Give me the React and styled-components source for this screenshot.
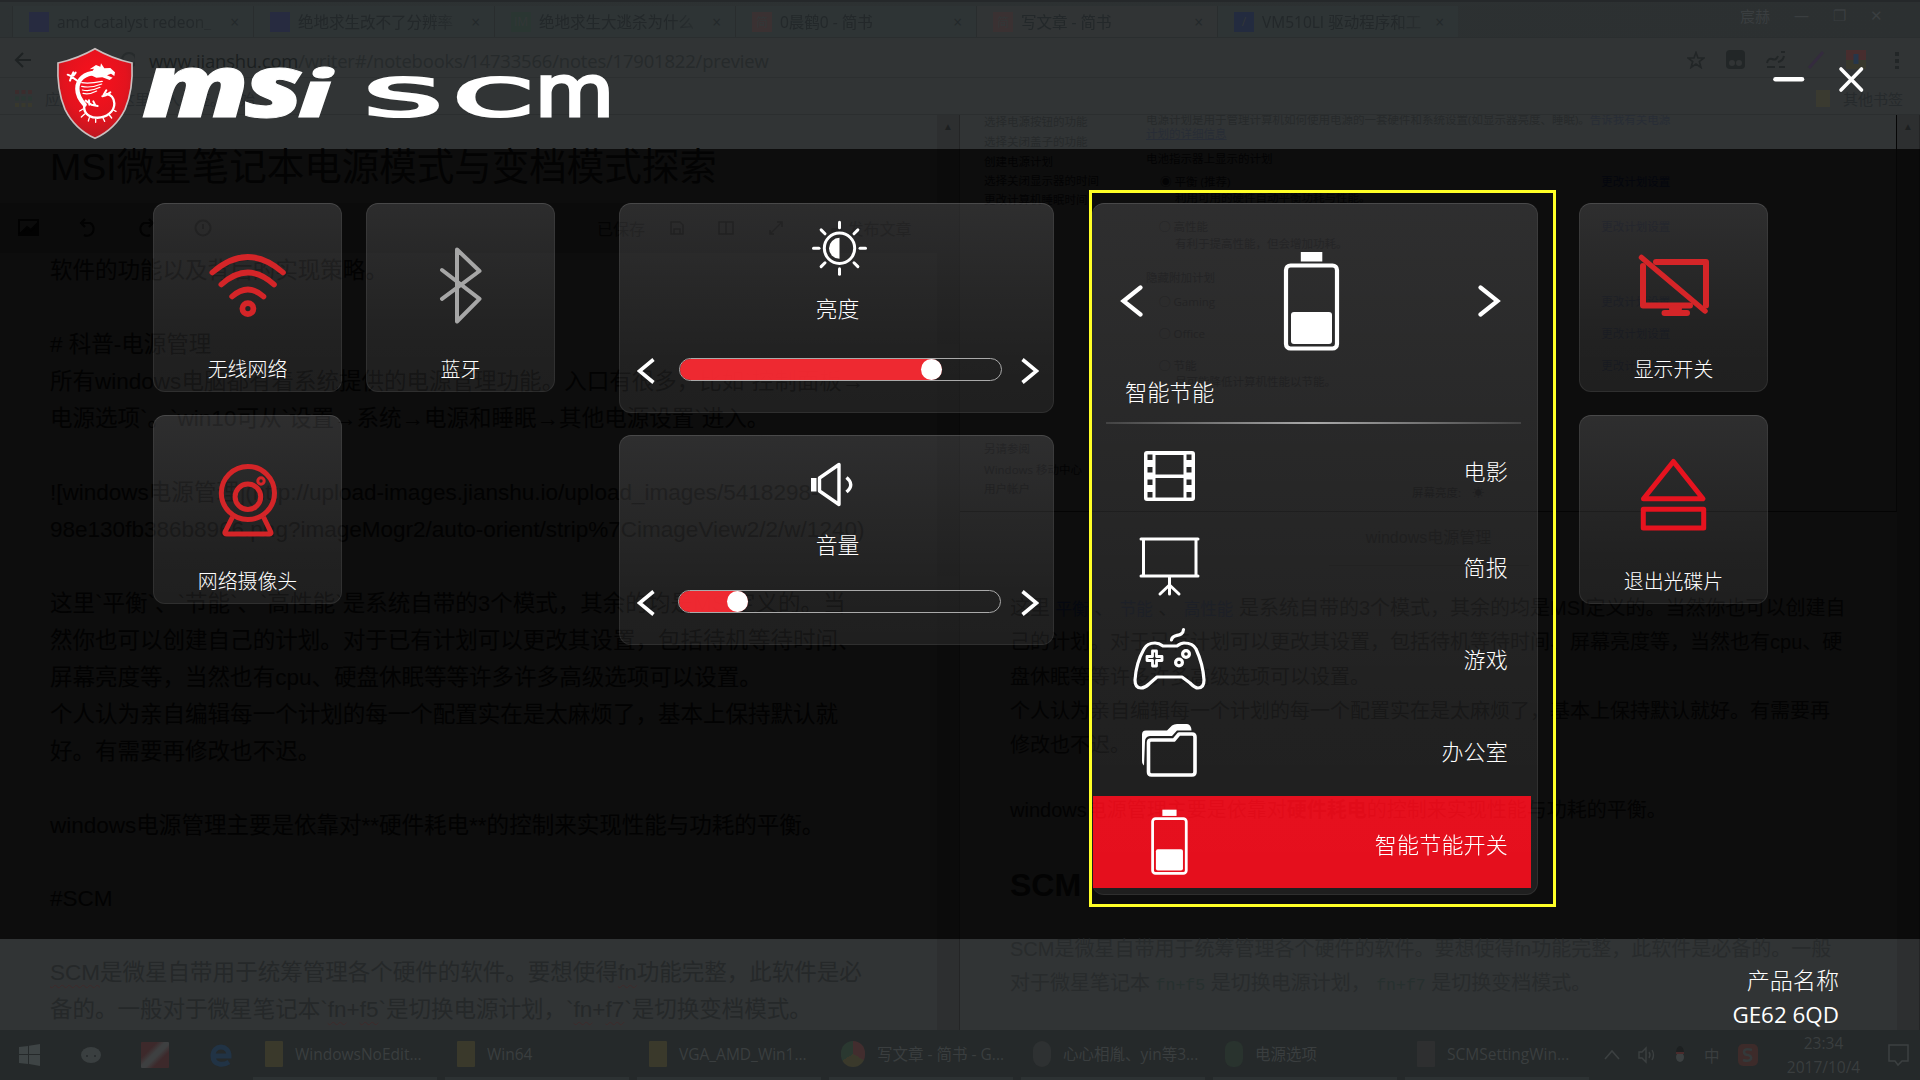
import React from 'react';
import styled, { createGlobalStyle } from 'styled-components';

const cjk = `"Liberation Sans", "Noto Sans CJK SC", sans-serif`;
const ui = `"Open Sans", "Noto Sans CJK SC", sans-serif`;

const GlobalStyle = createGlobalStyle`
  * { box-sizing: border-box; }
  body { margin: 0; background: #0d0d0d; overflow: hidden; }
`;

/* ---------- page stack ---------- */
const Screen = styled.div`
  display: grid;
  width: 1920px;
  height: 1080px;
  overflow: hidden;
  font-family: ${cjk};
`;

const Layer = styled.div`
  grid-area: 1 / 1;
  display: flex;
  flex-direction: column;
  min-width: 0;
  height: 1080px;
  white-space: pre;
`;

const Desktop = styled(Layer)`
  background: linear-gradient(
    #313435 0 149px,
    #0d0d0d 149px 939px,
    #313435 939px 1030px,
    #25292a 1030px
  );
`;

/* ---------- dimmed browser ---------- */
const TabStrip = styled.div`
  display: flex;
  align-items: center;
  height: 38px;
  padding: 4px 0 0 12px;
  border-top: 2px solid #25282a;
  border-bottom: 1px solid #2a2e2f;
  background: linear-gradient(90deg, #2d3233, #2c3031);
  font: 15.5px ${ui};
  color: #23282a;
`;

const Tab = styled.div`
  display: flex;
  align-items: center;
  gap: 8px;
  width: 241px;
  height: 31px;
  padding: 0 14px 0 16px;
  border-left: 1px solid #292d2e;
  background: ${(p) => (p.$active ? '#313435' : '#2e3435')};
`;

const TabTitle = styled.span`
  flex: 1;
  mask-image: linear-gradient(90deg, #000 80%, rgba(0, 0, 0, 0.3));
`;

const Favicon = styled.i`
  display: grid;
  place-items: center;
  width: 20px;
  height: 20px;
  background: ${(p) => p.$c};
  font: 12px ${ui};
  color: #333738;
`;

const WindowButtons = styled.div`
  display: flex;
  gap: 24px;
  margin-left: 282px;
  padding-bottom: 12px;
  font-size: 15px;
  color: #3a3e40;
`;

const AddressRow = styled.div`
  display: flex;
  align-items: center;
  height: 40px;
  padding: 5px 15px 0 13px;
  border-bottom: 1px solid #2c2f30;
  font: 18.4px ${ui};
  color: #262a2b;
`;

const Url = styled.div`
  flex: 1;
  padding-left: 14px;
  letter-spacing: -0.15px;
  b { font-weight: 400; color: #1b1f20; }
`;

const Extensions = styled.div`
  display: flex;
  align-items: center;
  gap: 20px;
`;

const Bookmarks = styled.div`
  display: flex;
  align-items: center;
  gap: 13px;
  height: 37px;
  padding: 4px 17px 0 15px;
  border-bottom: 1px solid #2b2e2f;
  font: 15px ${ui};
  color: #262a2c;
`;

const BookmarkFolder = styled.i`
  width: 14px;
  height: 17px;
  margin-left: auto;
  background: #3a3a30;
`;

const Panes = styled.div`
  display: flex;
  height: 915px;
`;

const Editor = styled.div`
  width: 938px;
  padding: 32px 0 0 50px;
  overflow: hidden;
`;

const EditorTitle = styled.div`
  height: 40px;
  line-height: 40px;
  font-size: 37.5px;
  color: #030303;
`;

const EditorTools = styled.div`
  display: flex;
  align-items: center;
  height: 50px;
  margin: 16px 0 0 -50px;
  padding-left: 17px;
  background: #0b0b0b;
  font-size: 16px;
  color: #030303;
`;

const Tool = styled.span`
  width: ${(p) => p.$w}px;
`;

const SourceLine = styled.div`
  height: 36.97px;
  line-height: 36.97px;
  font-size: 22.53px;
  color: ${(p) => (p.$foot ? '#252829' : '#020202')};
`;

const Squiggle = styled.span`
  text-decoration: underline wavy #3d292a 1px;
  text-underline-offset: 4px;
`;

const Gutter = styled.div`
  width: 23px;
  border-right: 1px solid rgba(0, 0, 0, 0.2);
  background: rgba(0, 0, 0, 0.08);
  text-align: center;
  font-size: 10px;
  line-height: 24px;
  color: #1d2021;
`;

const Preview = styled.div`
  width: 937px;
`;

const PowerWindow = styled.div`
  display: flex;
  height: 397px;
  border-bottom: 1px solid #040404;
  border-right: 1px solid #060606;
  font: 11.5px ${ui};
  overflow: hidden;
`;

const PowerNav = styled.div`
  width: 186px;
  padding-left: 24px;
`;

const PowerBody = styled.div`
  flex: 1;
`;

const Small = styled.div`
  display: flex;
  justify-content: space-between;
  height: 16px;
  line-height: 16px;
  margin-top: ${(p) => p.$gap}px;
  padding-left: ${(p) => p.$in || 0}px;
  padding-right: 288px;
  color: ${(p) => (p.$head ? '#272a2b' : '#030304')};
`;

const LinkText = styled.span`
  color: ${(p) => (p.$head ? '#282d36' : '#04060d')};
`;

const Caption = styled.div`
  width: 200px;
  margin: 14px auto 0;
  padding-bottom: 15px;
  border-bottom: 1px solid #090909;
  text-align: center;
  font-size: 16px;
  line-height: 24px;
  color: #050505;
`;

const Para = styled.div`
  height: 34.3px;
  line-height: 34.3px;
  margin-top: ${(p) => p.$gap || 0}px;
  padding-left: 50px;
  font-size: 20px;
  color: ${(p) => (p.$foot ? '#282b2c' : '#030303')};
  code { font: 16.5px "Liberation Mono", "Noto Sans CJK SC", monospace; color: ${(p) => (p.$foot ? '#27302f' : '#050810')}; }
`;

const Heading = styled(Para)`
  font-size: 32px;
  font-weight: 700;
`;

const Taskbar = styled.div`
  display: flex;
  align-items: center;
  height: 50px;
  font: 15.5px ${ui};
  color: #3a3e3f;
`;

const Pinned = styled.div`
  display: flex;
  align-items: center;
  gap: 40px;
  width: 253px;
  padding-left: 19px;
`;

const Task = styled.div`
  display: flex;
  align-items: center;
  gap: 12px;
  width: 184px;
  height: 50px;
  margin-right: 8px;
  padding-left: 12px;
  border-bottom: 3px solid #2d3233;
`;

const TaskIcon = styled.i`
  flex: none;
  width: ${(p) => p.$w || 18}px;
  height: 26px;
  border-radius: ${(p) => p.$r || 1}px;
  background: ${(p) => p.$c};
`;

const Tray = styled.div`
  display: flex;
  align-items: center;
  gap: 18px;
  padding-left: 7px;
`;

const Clock = styled.div`
  width: 92px;
  margin-left: 2px;
  text-align: center;
  line-height: 24px;
`;

/* ---------- control center ---------- */
const Header = styled.header`
  display: flex;
  justify-content: space-between;
  height: 149px;
`;

const WindowControls = styled.svg`
  width: 147px;
  height: 149px;
`;

const Main = styled.main`
  display: flex;
  align-items: flex-start;
  height: 790px;
  padding: 41px 0 0 153px;
`;

const Tiles = styled.section`
  display: grid;
  grid-template-columns: repeat(${(p) => p.$cols}, 189px);
  gap: 23px 24px;
  margin: 13px ${(p) => p.$right}px 0 0;
`;

const surface = `
  border: 1px solid rgba(255, 255, 255, 0.07);
  border-top-color: rgba(255, 255, 255, 0.13);
  border-radius: 12px;
  background: linear-gradient(rgba(250, 250, 255, 0.14), rgba(255, 255, 255, 0.085) 75%, rgba(255, 255, 255, 0.08));
  background-origin: border-box;
`;

const Tile = styled.button`
  ${surface}
  display: flex;
  flex-direction: column;
  align-items: center;
  width: 189px;
  height: 189px;
  padding: 0;
  color: #fff;
  font: 19.9px/30px ${cjk};
  font-weight: 300;
`;

const TileArt = styled.svg`
  width: 189px;
  height: 152px;
  flex: none;
  margin-top: -1px;
`;

const Sliders = styled.section`
  display: flex;
  flex-direction: column;
  gap: 22px;
  width: 435px;
  margin: 13px 35px 0 0;
`;

const SliderCard = styled.div`
  ${surface}
  display: flex;
  flex-direction: column;
  align-items: center;
  height: 210px;
  color: #fff;
`;

const SliderArt = styled.svg`
  width: 433px;
  height: 88px;
  flex: none;
`;

const SliderLabel = styled.div`
  margin-top: ${(p) => p.$gap}px;
  padding-left: 2px;
  font-size: 21.8px;
  font-weight: 300;
  line-height: 32px;
`;

const SliderRow = styled.div`
  display: flex;
  align-items: center;
  justify-content: space-between;
  width: 402px;
  margin: auto 0 ${(p) => p.$bottom}px 2px;
`;

const Track = styled.div`
  display: flex;
  width: 323px;
  height: 23px;
  margin-left: ${(p) => p.$shift}px;
  margin-top: -3px;
  border: 1px solid #aaa;
  border-radius: 12px;
  overflow: hidden;
`;

const Fill = styled.div`
  display: flex;
  justify-content: flex-end;
  border-radius: 0 11px 11px 0;
  background: rgba(247, 42, 50, 0.96);
`;

const Knob = styled.i`
  width: 21px;
  height: 21px;
  border-radius: 50%;
  background: #fff;
`;

const Highlight = styled.section`
  width: 467px;
  height: 717px;
  margin-right: 23px;
  padding-top: 10px;
  border: 3px solid #ffff26;
`;

const PowerPanel = styled.div`
  ${surface}
  border-left: 0;
  width: 446px;
  height: 692px;
  color: #fff;
  font-weight: 300;
`;

const CurrentMode = styled.div`
  height: 219px;
  font-size: 22.3px;
  line-height: 32px;
`;

const ModeArt = styled.svg`
  display: block;
  width: 445px;
  height: 172px;
`;

const ModeName = styled.div`
  padding: 2px 0 0 33px;
`;

const Divider = styled.div`
  height: 2px;
  margin: -1px 16px 5.6px 14px;
  background: linear-gradient(90deg, rgba(255, 255, 255, 0.12), rgba(255, 255, 255, 0.6), rgba(255, 255, 255, 0.12));
`;

const ModeRow = styled.div`
  display: flex;
  align-items: center;
  justify-content: space-between;
  width: 438px;
  height: 91.6px;
  margin-left: 1px;
  padding-right: 23px;
  background: ${(p) => (p.$on ? 'rgba(244, 0, 16, 0.88)' : 'transparent')};
  ${(p) => p.$on && 'backdrop-filter: brightness(4);'}
`;

const ModeIcon = styled.svg`
  width: 154px;
  height: 91px;
`;

const ModeLabel = styled.span`
  margin-top: ${(p) => p.$dy}px;
  font-size: 22px;
  letter-spacing: 0.2px;
`;

const Footer = styled.footer`
  display: flex;
  flex-direction: column;
  align-items: flex-end;
  height: 91px;
  padding: 25px 81px 0 0;
  color: #fff;
  font: 23.1px/34px ${cjk};
  font-weight: 300;
`;

const Model = styled.span`
  font: 22.4px/34px ${ui};
`;

const Chevron = ({ right }) => (
  <svg width="18" height="26" viewBox="0 0 18 26" fill="none" stroke="#fff" strokeWidth="3.6">
    <path d={right ? 'M1.5 1.5 L15.5 13 L1.5 24.5' : 'M16.5 1.5 L2.5 13 L16.5 24.5'} />
  </svg>
);

const Logo = () => (
  <svg width="640" height="149" viewBox="0 0 640 149">
    <defs>
      <radialGradient id="shield" cx="0.5" cy="0.35" r="0.7">
        <stop offset="0" stopColor="#fb101c" />
        <stop offset="0.6" stopColor="#e3131e" />
        <stop offset="1" stopColor="#b31a22" />
      </radialGradient>
    </defs>
    <g transform="translate(50 40) scale(.33333)">
      <path d="M135 26 Q185 55 246 69 Q250 150 225 208 Q195 268 135 295 Q75 268 45 208 Q20 150 24 69 Q85 55 135 26Z" fill="url(#shield)" stroke="#c9bfbf" strokeWidth="5" />
      <g fill="none" stroke="#fff" strokeLinecap="round" strokeLinejoin="round">
        <path d="M137 99 C104 99 82 118 82 146 C82 166 92 181 104 194" strokeWidth="13" />
        <path d="M104 192 C98 215 112 231 138 233 C170 235 194 213 193 190 C192 174 183 163 169 162" strokeWidth="7" />
        <path d="M107 182 L124 194 L143 198 M118 194 L117 181 M130 184 L136 196" strokeWidth="6" />
        <path d="M95 128 C118 132 137 128 157 124 M95 139 C118 144 138 139 155 132 M97 150 C119 155 134 150 150 142 M99 160 C115 164 127 160 140 153" strokeWidth="3.5" />
        <path d="M83 123 L64 110 L70 97 M65 109 L53 104 M64 111 L60 122 M71 106 L77 98" strokeWidth="6" />
        <path d="M161 164 L169 151 M170 164 L181 157 M168 166 L157 169" strokeWidth="6" />
        <path d="M99 207 L89 213 M104 222 L94 231 M118 233 L115 243 M137 237 L137 247 M159 234 L164 244 M178 225 L185 234 M190 210 L198 214" strokeWidth="4" />
      </g>
      <path d="M120 104 L132 86 L119 88 L138 75 L151 80 L153 70 L163 85 L181 84 L195 97 L193 108 L183 101 L171 106 L188 113 L179 120 L157 112 L139 113Z" fill="#fff" />
    </g>
    <g fill="#fff">
      <text y="117" fontFamily="'Open Sans', 'Noto Sans', sans-serif" fontWeight="800" fontStyle="italic" stroke="#fff" strokeWidth="1">
        <tspan x="142" fontSize="87" textLength="107" lengthAdjust="spacingAndGlyphs">m</tspan>
        <tspan x="244" fontSize="87" textLength="60" lengthAdjust="spacingAndGlyphs">s</tspan>
        <tspan x="298" fontSize="64" textLength="33" lengthAdjust="spacingAndGlyphs">i</tspan>
      </text>
      <text y="116" fontFamily="'DejaVu Sans', sans-serif" stroke="#fff" strokeWidth="3.2">
        <tspan x="364" fontSize="52" textLength="78" lengthAdjust="spacingAndGlyphs">S</tspan>
        <tspan x="454" fontSize="52" textLength="78" lengthAdjust="spacingAndGlyphs">C</tspan>
        <tspan x="535" fontSize="71" textLength="79" lengthAdjust="spacingAndGlyphs">m</tspan>
      </text>
    </g>
  </svg>
);

const red = '#d42528';
const tiles = {
  wifi: (
    <g fill="none" stroke={red} strokeWidth="5.6" strokeLinecap="round">
      <path d="M212.8 272.5 Q248.5 241.5 283.5 272.5" />
      <path d="M221.8 284.5 Q248.5 260.5 274.5 284.5" />
      <path d="M232.6 296.5 Q248.5 282.5 264 296.5" />
      <circle cx="248.4" cy="308.6" r="5.5" strokeWidth="5.8" />
    </g>
  ),
  bluetooth: (
    <path d="M442 270 L479.5 298.8 L457 321.5 V249.5 L479.5 271 L442 298.8" fill="none" stroke="#a6a6a6" strokeWidth="4" strokeLinecap="round" strokeLinejoin="round" />
  ),
  webcam: (
    <g fill="none" stroke={red} strokeWidth="5" strokeLinejoin="round">
      <circle cx="248.4" cy="493" r="26.6" />
      <circle cx="248.4" cy="496.8" r="12.8" />
      <circle cx="261.5" cy="481" r="3.2" strokeWidth="3" />
      <path d="M233 517 L225.5 532 Q225 534 227 534 H270 Q272 534 271.3 532 L264 517" />
    </g>
  ),
  display: (
    <g fill="none" stroke={red} strokeWidth="6" strokeLinejoin="round" strokeLinecap="round">
      <path d="M1656 262 H1706 V305.5 M1690 305.5 H1643 V266" />
      <path d="M1664.5 313 H1687 M1672 308.5 H1679" />
      <path d="M1641.5 257.5 L1705 311" strokeWidth="5.5" />
    </g>
  ),
  eject: (
    <g fill="none" stroke="#e6131f" strokeWidth="5" strokeLinejoin="round">
      <path d="M1673.4 461.5 L1703 498.7 H1643.5Z" />
      <rect x="1643.3" y="509.3" width="60.4" height="18.8" />
    </g>
  ),
};

const IconTile = ({ icon, x, y, label }) => (
  <Tile>
    <TileArt viewBox={`${x} ${y} 189 152`}>{tiles[icon]}</TileArt>
    {label}
  </Tile>
);

const SliderControl = ({ art, label, gap, value, bottom, shift }) => (
  <SliderCard>
    {art}
    <SliderLabel $gap={gap}>{label}</SliderLabel>
    <SliderRow $bottom={bottom}>
      <Chevron />
      <Track $shift={shift}>
        <Fill style={{ width: value }}><Knob /></Fill>
      </Track>
      <Chevron right />
    </SliderRow>
  </SliderCard>
);

const rays = [0, 45, 90, 135, 180, 225, 270, 315];

const Battery = ({ s = 1 }) => (
  <g transform={`scale(${s})`}>
    <rect x="-10.5" y="-49" width="21.5" height="9.5" fill="#fff" />
    <rect x="-25.3" y="-35.5" width="51" height="83" rx="4.5" fill="none" stroke="#fff" strokeWidth="4.2" />
    <rect x="-20.3" y="11" width="41" height="32" rx="3" fill="#fff" />
  </g>
);

const modeIcons = {
  film: (
    <path
      transform="translate(1144 451)"
      fill="#fff"
      fillRule="evenodd"
      d="M3 0 H48 Q51 0 51 3 V47 Q51 50 48 50 H3 Q0 50 0 47 V3 Q0 0 3 0Z M11.5 4 V23.5 H39.5 V4Z M11.5 27 V46.5 H39.5 V27Z M3.5 3.5 V9 H8.5 V3.5Z M3.5 16 V21.5 H8.5 V16Z M3.5 28.5 V34 H8.5 V28.5Z M3.5 41 V46.5 H8.5 V41Z M42.5 3.5 V9 H47.5 V3.5Z M42.5 16 V21.5 H47.5 V16Z M42.5 28.5 V34 H47.5 V28.5Z M42.5 41 V46.5 H47.5 V41Z"
    />
  ),
  board: (
    <g fill="none" stroke="#fff" strokeWidth="3" strokeLinecap="round">
      <path d="M1141 539.5 H1198 M1141 576.5 H1198 M1143.5 539.5 V576 M1196 539.5 V576 M1169.5 577 V594.5 M1169.5 585.5 L1160 594.5 M1169.5 585.5 L1179 594.5" />
    </g>
  ),
  pad: (
    <g fill="none" stroke="#fff" strokeWidth="3.2" strokeLinejoin="round" strokeLinecap="round">
      <path d="M1155 643 Q1159 643 1163 646 H1177 Q1181 643 1184 643 Q1193 643 1196 649 Q1203 664 1204 680 Q1204 688 1198 688 Q1195 688 1190 683 L1182 677 H1157 L1149 684 Q1145 688 1141 688 Q1135 688 1135 680 Q1136 663 1144 649 Q1147 643 1155 643Z" />
      <path d="M1171.5 640 C1172 633 1183 638 1183.5 629.5" />
      <path d="M1152.5 651 H1156.5 V656.5 H1162 V660.5 H1156.5 V666 H1152.5 V660.5 H1147 V656.5 H1152.5Z" strokeWidth="2.8" />
      <circle cx="1186" cy="654" r="3.4" />
      <circle cx="1179" cy="662.5" r="3.4" />
    </g>
  ),
  folder: (
    <g fill="none" stroke="#fff" strokeWidth="3.6" strokeLinejoin="round">
      <path d="M1148.5 742 Q1148.5 739.5 1151 739.5 H1174 L1179 733.5 H1192 Q1195 733.5 1195 736.5 V771.5 Q1195 774.5 1192 774.5 H1151.5 Q1148.5 774.5 1148.5 771.5Z" />
      <path d="M1144 765 Q1142 764 1142 760 V734 Q1142 730 1146 730 H1167 L1172 725 Q1174 723.5 1177 723.5 H1187 Q1191 723.5 1191.5 730 H1177 L1172 735.5 H1150 Q1145 736 1145 741Z" fill="#fff" stroke="none" />
    </g>
  ),
  battery: <g transform="translate(1169.3 842)"><Battery s={0.66} /></g>,
};

const modes = [
  { icon: 'film', label: '电影', y: 430, dy: -10 },
  { icon: 'board', label: '简报', y: 521.5, dy: -2 },
  { icon: 'pad', label: '游戏', y: 613, dy: -2 },
  { icon: 'folder', label: '办公室', y: 704.5, dy: -1 },
  { icon: 'battery', label: '智能节能开关', y: 796, dy: 3, on: true },
];

const tabs = [
  ['amd catalyst redeon_', '#272b40'],
  ['绝地求生改不了分辨率', '#272b40'],
  ['绝地求生大逃杀为什么', '#2a3632', 'IM'],
  ['0晨鹤0 - 简书', '#3a3132', '简'],
  ['写文章 - 简书', '#3a3132', '简', true],
  ['VM510LI 驱动程序和工', '#232b3f', '/'],
];

const source = [
  '软件的功能以及背后的实现策略。',
  '',
  '# 科普-电源管理',
  '所有windows电脑都有着系统提供的电源管理功能。入口有很多，比如`控制面板→',
  '电源选项`。`win10可从`设置→系统→电源和睡眠→其他电源设置`进入。',
  '',
  '![windows电源管理](http://upload-images.jianshu.io/upload_images/5418298-',
  '98e130fb386b8966.png?imageMogr2/auto-orient/strip%7CimageView2/2/w/1240)',
  '',
  '这里`平衡`、`节能`、`高性能`是系统自带的3个模式，其余的均是MSI定义的。当',
  '然你也可以创建自己的计划。对于已有计划可以更改其设置，包括待机等待时间、',
  '屏幕亮度等，当然也有cpu、硬盘休眠等等许多许多高级选项可以设置。',
  '个人认为亲自编辑每一个计划的每一个配置实在是太麻烦了，基本上保持默认就',
  '好。有需要再修改也不迟。',
  '',
  'windows电源管理主要是依靠对**硬件耗电**的控制来实现性能与功耗的平衡。',
  '',
  '#SCM',
  '',
];

const tasks = [
  ['WindowsNoEdit...', '#3a392b'],
  ['Win64', '#3a392b'],
  ['VGA_AMD_Win1...', '#3a392b'],
  ['写文章 - 简书 - G...', 'conic-gradient(#422d2e 0 33%, #3a392b 0 66%, #2a3830 0)', 12, 24],
  ['心心相胤、yin等3...', '#2e3132', 9],
  ['电源选项', '#29332e', 8],
  ['SCMSettingWin...', '#2e2f30'],
];

const change = <LinkText>更改计划设置</LinkText>;

const Browser = () => (
  <Desktop>
    <TabStrip>
      {tabs.map(([title, color, mark, active]) => (
        <Tab key={title} $active={active}>
          <Favicon $c={color}>{mark}</Favicon>
          <TabTitle>{title}</TabTitle>
          <span>×</span>
        </Tab>
      ))}
      <WindowButtons><span>宸赫</span><span>—</span><span>❐</span><span>✕</span></WindowButtons>
    </TabStrip>
    <AddressRow>
      <svg width="122" height="24" viewBox="0 0 122 24" fill="none" stroke="#1e2223" strokeWidth="2">
        <path d="M18 12 H4 M10 5 L3 12 L10 19" />
        <circle cx="80" cy="12" r="8" stroke="#272b2c" />
        <circle cx="116" cy="12" r="7" stroke="#272b2c" />
      </svg>
      <Url><b>www.jianshu.com</b>/writer#/notebooks/14733566/notes/17901822/preview</Url>
      <Extensions>
        <svg width="18" height="18" viewBox="0 0 18 18" fill="none" stroke="#222627" strokeWidth="1.6">
          <path d="M9 1.500 L11 7 H17 L12.300 10.500 L14 16.500 L9 13 L4 16.500 L5.700 10.500 L1 7 H7Z" />
        </svg>
        <svg width="180" height="22" viewBox="0 0 180 22" fill="none">
          <rect x="1" y="1" width="19" height="19" rx="4" fill="#222627" />
          <circle cx="7" cy="14" r="3" fill="#313435" /><circle cx="14" cy="14" r="3" fill="#313435" />
          <path d="M42 14 Q43 9 47 10 Q51 12 53 7 M53 13 Q58 12 59 7 M56 3 H60 M42 18 H50 M54 18 H60" stroke="#222627" strokeWidth="2" />
          <path d="M84 19 L98 3" stroke="#342b3e" strokeWidth="3" />
          <rect x="121" y="1" width="20" height="10" fill="#472d2e" /><rect x="121" y="11" width="20" height="9" fill="#38382d" />
          <path d="M131 5 V15" stroke="#26364a" strokeWidth="5" />
          <path d="M172 3 V20" stroke="#222627" strokeWidth="4" strokeDasharray="4 3" />
        </svg>
      </Extensions>
    </AddressRow>
    <Bookmarks>
      <svg width="17" height="17" viewBox="0 0 17 17" strokeWidth="4" strokeDasharray="4 2.500">
        <path d="M0 2 H17" stroke="#3b2c2d" /><path d="M0 8.500 H17" stroke="#2a3733" /><path d="M0 15 H17" stroke="#38382d" />
      </svg>
      <span>应用　点击这里导入书签。开始</span>
      <BookmarkFolder />
      <span>其他书签</span>
    </Bookmarks>
    <Panes>
      <Editor>
        <EditorTitle>MSI微星笔记本电源模式与变档模式探索</EditorTitle>
        <EditorTools>
          <svg width="580" height="24" viewBox="17 215 580 24" fill="none" stroke="#020202" strokeWidth="2">
            <rect x="19" y="219" width="19" height="15" /><path d="M21 232 L27 226 L31 229 L36 224 V232Z" fill="#020202" />
            <path d="M82 222 H90 A6 6 0 1 1 84 234 M85 218 L81 222 L85 226" />
            <path d="M152 222 H144 A6 6 0 1 0 150 234 M149 218 L153 222 L149 226" />
            <circle cx="203" cy="227" r="7.5" /><path d="M203 223 V228" />
          </svg>
          <Tool $w={73}>已保存</Tool>
          <svg width="160" height="24" viewBox="670 215 160 24" fill="none" stroke="#020202" strokeWidth="1.5">
            <path d="M671 221 H680 L683 224 V233 H671Z M674 233 V228 H680 V233" />
            <rect x="719" y="221" width="14" height="12" /><path d="M726 221 V233" />
            <path d="M770 233 L782 221 M777 221 H782 V226 M770 229 V233 H774" />
          </svg>
          <Tool $w={80}>➦ 发布文章</Tool>
        </EditorTools>
        {source.map((text, i) => <SourceLine key={i}>{text}</SourceLine>)}
        <SourceLine $foot><Squiggle>SCM</Squiggle>是微星自带用于统筹管理各个硬件的软件。要想使得<Squiggle>fn</Squiggle>功能完整，此软件是必</SourceLine>
        <SourceLine $foot>备的。一般对于微星笔记本`<Squiggle>fn</Squiggle>+<Squiggle>f5</Squiggle>`是切换电源计划，`<Squiggle>fn</Squiggle>+<Squiggle>f7</Squiggle>`是切换变档模式。</SourceLine>
      </Editor>
      <Gutter>▲</Gutter>
      <Preview>
        <PowerWindow>
          <PowerNav>
            <Small $gap={-1} $head>选择电源按钮的功能</Small>
            <Small $gap={4} $head>选择关闭盖子的功能</Small>
            <Small $gap={4}>创建电源计划</Small>
            <Small $gap={3}>选择关闭显示器的时间</Small>
            <Small $gap={3}>更改计算机睡眠时间</Small>
            <Small $gap={233}>另请参阅</Small>
            <Small $gap={5}>Windows 移动中心</Small>
            <Small $gap={3}>用户帐户</Small>
          </PowerNav>
          <PowerBody>
            <Small $gap={-3} $head><span>电源计划是用于管理计算机如何使用电源的一套硬件和系统设置(如显示器亮度、睡眠)。<LinkText $head>告诉我有关电源</LinkText></span></Small>
            <Small $gap={-2} $head><LinkText $head><u>计划的详细信息</u></LinkText></Small>
            <Small $gap={9}>电池指示器上显示的计划</Small>
            <Small $gap={7} $in={14}>◉ 平衡 (推荐){change}</Small>
            <Small $gap={0} $in={29}>利用可用的硬件自动平衡功耗与性能。</Small>
            <Small $gap={13} $in={13}>◯ 高性能{change}</Small>
            <Small $gap={1} $in={29}>有利于提高性能，但会增加功耗。</Small>
            <Small $gap={18}>隐藏附加计划</Small>
            <Small $gap={8} $in={13}>◯ Gaming{change}</Small>
            <Small $gap={16} $in={13}>◯ Office{change}</Small>
            <Small $gap={16} $in={13}>◯ 节能{change}</Small>
            <Small $gap={0} $in={29}>尽可能降低计算机性能以节能。</Small>
            <Small $gap={95} $in={266}>屏幕亮度:　☀</Small>
          </PowerBody>
        </PowerWindow>
        <Caption>windows电源管理</Caption>
        <Para $gap={25}>这里 <code>平衡</code> 、 <code>节能</code> 、 <code>高性能</code> 是系统自带的3个模式，其余的均是MSI定义的。当然你也可以创建自</Para>
        <Para>己的计划。对于已有计划可以更改其设置，包括待机等待时间、屏幕亮度等，当然也有cpu、硬</Para>
        <Para>盘休眠等等许多许多高级选项可以设置。</Para>
        <Para>个人认为亲自编辑每一个计划的每一个配置实在是太麻烦了，基本上保持默认就好。有需要再</Para>
        <Para>修改也不迟。</Para>
        <Para $gap={31}>windows电源管理主要是依靠对<b>硬件耗电</b>的控制来实现性能与功耗的平衡。</Para>
        <Heading $gap={40}>SCM</Heading>
        <Para $foot $gap={30}>SCM是微星自带用于统筹管理各个硬件的软件。要想使得fn功能完整，此软件是必备的。一般</Para>
        <Para $foot>对于微星笔记本 <code>fn+f5</code> 是切换电源计划， <code>fn+f7</code> 是切换变档模式。</Para>
      </Preview>
      <Gutter>▲</Gutter>
    </Panes>
    <Taskbar>
      <Pinned>
        <svg width="22" height="24" viewBox="0 0 22 24" fill="#3e4445"><path d="M0 4 L9 3 V11 H0Z M10 2.8 L21 1 V11 H10Z M0 12 H9 V21 L0 20Z M10 12 H21 V23 L10 21Z" /></svg>
        <svg width="20" height="24" viewBox="0 0 20 24"><ellipse cx="10" cy="12" rx="10" ry="8" fill="#3a3f40" /><circle cx="6" cy="13" r="1" fill="#25292a" /><circle cx="14" cy="13" r="1" fill="#25292a" /></svg>
        <TaskIcon $w={28} $c="linear-gradient(135deg, #3d292b 30%, #3e4041 45% 55%, #3d292b 70%)" />
        <svg width="24" height="24" viewBox="0 0 24 24" fill="none" stroke="#213345" strokeWidth="5"><path d="M3 13 H20 C20 1 4 1 4 13 C4 22 14 23 20 19" /></svg>
      </Pinned>
      {tasks.map(([name, color, r, w]) => (
        <Task key={name}><TaskIcon $c={color} $r={r} $w={w} />{name}</Task>
      ))}
      <Tray>
        <svg width="16" height="12" viewBox="0 0 16 12" fill="none" stroke="#3c4041" strokeWidth="1.6"><path d="M1 10 L8 2 L15 10" /></svg>
        <svg width="18" height="18" viewBox="0 0 18 18" fill="none" stroke="#3c4041" strokeWidth="1.4"><path d="M1 6 H4 L8 2 V16 L4 12 H1Z M11 6 Q13 9 11 12 M14 4 Q17 9 14 14" /></svg>
        <svg width="12" height="20" viewBox="0 0 12 20"><ellipse cx="6" cy="8" rx="4" ry="7" fill="#1d2021" /><ellipse cx="6" cy="12" rx="4" ry="5" fill="#3c4041" /><path d="M2 8 H10" stroke="#4a2b2c" strokeWidth="2" /></svg>
        <span>中</span>
        <svg width="20" height="22" viewBox="0 0 20 22"><rect width="20" height="22" rx="5" fill="#3d2b2a" /><path d="M14 6 Q6 4 6 8 Q6 11 10 11 Q14 12 13 15 Q11 18 5 16" fill="none" stroke="#34393a" strokeWidth="2.5" /></svg>
        <Clock>23:34<br />2017/10/4</Clock>
        <svg width="22" height="24" viewBox="0 0 22 24" fill="none" stroke="#3c4041" strokeWidth="1.5"><path d="M1 2 H20 V18 H14 L10 22 L7 18 H1Z" /></svg>
      </Tray>
    </Taskbar>
  </Desktop>
);

export default function App() {
  return (
    <Screen>
      <GlobalStyle />
      <Browser />
      <Layer>
        <Header>
          <Logo />
          <WindowControls viewBox="1773 0 147 149" stroke="#fff" strokeLinecap="round">
            <path d="M1775.5 79.3 H1802" strokeWidth="4.6" />
            <path d="M1841 69 L1861.5 90 M1861.5 69 L1841 90" strokeWidth="3.6" />
          </WindowControls>
        </Header>
        <Main>
          <Tiles $cols={2} $right={64}>
            <IconTile icon="wifi" x={153.5} y={203} label="无线网络" />
            <IconTile icon="bluetooth" x={366} y={203} label="蓝牙" />
            <IconTile icon="webcam" x={153.5} y={415} label="网络摄像头" />
          </Tiles>
          <Sliders>
            <SliderControl
              label="亮度" gap={2} value={262} bottom={28} shift={6}
              art={
                <SliderArt viewBox="620 204 433 88">
                  <g transform="translate(839.5 248.3)" stroke="#fff" strokeWidth="3" strokeLinecap="round" fill="none">
                    <circle r="15.2" />
                    <path d="M0 -10.5 A10.5 10.5 0 0 0 0 10.5Z" fill="#fff" stroke="none" />
                    {rays.map((a) => <path key={a} d="M0 -20.5 V-26" transform={`rotate(${a})`} />)}
                  </g>
                </SliderArt>
              }
            />
            <SliderControl
              label="音量" gap={6} value={69} bottom={28} shift={4}
              art={
                <SliderArt viewBox="620 436 433 88">
                  <g fill="none" stroke="#fff" strokeWidth="3.4" strokeLinejoin="round">
                    <rect x="811" y="478" width="5.5" height="13.5" fill="#fff" stroke="none" />
                    <path d="M819.5 478 L839 464.5 V504.5 L819.5 491Z" />
                    <path d="M846.5 477.5 Q855 484.5 846.5 492" />
                  </g>
                </SliderArt>
              }
            />
          </Sliders>
          <Highlight>
            <PowerPanel>
              <CurrentMode>
                <ModeArt viewBox="1092 204 445 172" fill="none" stroke="#fff" strokeWidth="4.2" strokeLinecap="round">
                  <path d="M1140.5 287.5 L1123.5 301 L1140.5 314.5 M1480.5 287.5 L1497.5 301 L1480.5 314.5" />
                  <g transform="translate(1311.3 301)" stroke="none"><Battery /></g>
                </ModeArt>
                <ModeName>智能节能</ModeName>
              </CurrentMode>
              <Divider />
              {modes.map((m) => (
                <ModeRow key={m.icon} $on={m.on}>
                  <ModeIcon viewBox={`1093 ${m.y} 154 91`}>{modeIcons[m.icon]}</ModeIcon>
                  <ModeLabel $dy={m.dy}>{m.label}</ModeLabel>
                </ModeRow>
              ))}
            </PowerPanel>
          </Highlight>
          <Tiles $cols={1} $right={0}>
            <IconTile icon="display" x={1579} y={203} label="显示开关" />
            <IconTile icon="eject" x={1579} y={415} label="退出光碟片" />
          </Tiles>
        </Main>
        <Footer>
          <span>产品名称</span>
          <Model>GE62 6QD</Model>
        </Footer>
      </Layer>
    </Screen>
  );
}
